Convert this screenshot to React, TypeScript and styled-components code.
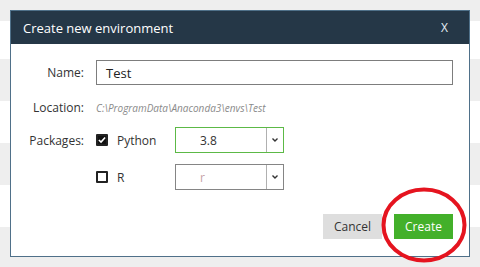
import {FunctionComponent} from 'react'
import styled, {createGlobalStyle} from "styled-components";

const GlobalStyle = createGlobalStyle`
  html, body {
    margin: 0;
    padding: 0;
    width: 480px;
    height: 267px;
    overflow: hidden;
    font-family: "Open Sans", "DejaVu Sans", sans-serif;
    background: linear-gradient(
      to bottom,
      #eeeeee 0 21px,
      #ffffff 21px 59px,
      #eeeeee 59px 101px,
      #ffffff 101px 143px,
      #eeeeee 143px 185px,
      #ffffff 185px 227px,
      #eeeeee 227px
    );
  }
`

const Page = styled.div`
  position: relative;
  width: 480px;
  height: 267px;
`

const Dialog = styled.div`
  position: absolute;
  left: 10px;
  top: 10px;
  width: 458px;
  height: 245px;
  border: 1px solid #4f7089;
  background: #ffffff;
  display: flex;
  flex-direction: column;
`

const Header = styled.div`
  height: 33px;
  background: #253747;
  color: #ffffff;
  display: flex;
  align-items: center;
  justify-content: space-between;
  padding: 0 21px 0 12px;
  font-size: 13px;
`

const Close = styled.span`
  font-size: 12px;
  color: #e6eef5;
`

const Body = styled.div`
  flex: 1;
  display: flex;
  flex-direction: column;
  padding: 16px 16px 17px 0;
`

const Row = styled.div<{ $mt?: number }>`
  display: grid;
  grid-template-columns: 73px 1fr;
  column-gap: 12px;
  align-items: center;
  margin-top: ${p => p.$mt ?? 0}px;
`

const Label = styled.div`
  text-align: right;
  font-size: 12px;
  color: #333333;
`

const TextInput = styled.div`
  height: 25px;
  box-sizing: border-box;
  border: 1px solid #7d7d7d;
  display: flex;
  align-items: center;
  padding-left: 9px;
  font-size: 13px;
  color: #222222;
`

const Path = styled.div`
  font-size: 10px;
  font-style: italic;
  color: #8a8a8a;
`

const Package = styled.div`
  display: flex;
  align-items: center;
`

const Check = styled.div`
  display: flex;
  align-items: center;
  width: 79px;
  font-size: 12px;
  color: #333333;
  gap: 9px;
`

const Box = styled.div<{ $on?: boolean }>`
  width: 12px;
  height: 12px;
  box-sizing: border-box;
  border: 2px solid #222222;
  border-radius: 1px;
  background: ${p => p.$on ? '#111111' : '#ffffff'};
  display: flex;
  align-items: center;
  justify-content: center;
`

const Select = styled.div<{ $active?: boolean }>`
  width: 109px;
  height: 26px;
  box-sizing: border-box;
  border: 1px solid ${p => p.$active ? '#5cb946' : '#858585'};
  display: flex;
`

const SelectValue = styled.div<{ $muted?: boolean }>`
  flex: 1;
  display: flex;
  align-items: center;
  padding-left: 24px;
  font-size: 12px;
  color: ${p => p.$muted ? '#c6a2a6' : '#333333'};
`

const Arrow = styled.div`
  width: 16px;
  border-left: 1px solid #b0b0b0;
  display: flex;
  align-items: center;
  justify-content: center;
`

const Footer = styled.div`
  margin-top: auto;
  display: flex;
  justify-content: flex-end;
  gap: 12px;
`

const Button = styled.div<{ $primary?: boolean }>`
  width: 59px;
  height: 25px;
  display: flex;
  align-items: center;
  justify-content: center;
  font-size: 12px;
  background: ${p => p.$primary ? '#43b02a' : '#dedede'};
  color: ${p => p.$primary ? '#ffffff' : '#333333'};
`

const Circle = styled.svg`
  position: absolute;
  left: 381px;
  top: 187px;
`

const Chevron = () => (
    <svg width="8" height="6" viewBox="0 0 8 6">
        <polyline points="1.5,1.5 4,4 6.5,1.5" fill="none" stroke="#333" strokeWidth="1.4"/>
    </svg>
)

const Tick = () => (
    <svg width="9" height="8" viewBox="0 0 9 8">
        <polyline points="1,4 3.4,6.4 8,1.2" fill="none" stroke="#fff" strokeWidth="1.8"/>
    </svg>
)

const App: FunctionComponent = () => {
    return (
        <>
            <GlobalStyle/>
            <Page>
                <Dialog>
                    <Header>
                        <span>Create new environment</span>
                        <Close>X</Close>
                    </Header>
                    <Body>
                        <Row>
                            <Label>Name:</Label>
                            <TextInput>Test</TextInput>
                        </Row>
                        <Row $mt={14}>
                            <Label>Location:</Label>
                            <Path>C:\ProgramData\Anaconda3\envs\Test</Path>
                        </Row>
                        <Row $mt={11}>
                            <Label>Packages:</Label>
                            <Package>
                                <Check><Box $on><Tick/></Box>Python</Check>
                                <Select $active>
                                    <SelectValue>3.8</SelectValue>
                                    <Arrow><Chevron/></Arrow>
                                </Select>
                            </Package>
                        </Row>
                        <Row $mt={11}>
                            <span/>
                            <Package>
                                <Check><Box/>R</Check>
                                <Select>
                                    <SelectValue $muted>r</SelectValue>
                                    <Arrow><Chevron/></Arrow>
                                </Select>
                            </Package>
                        </Row>
                        <Footer>
                            <Button>Cancel</Button>
                            <Button $primary>Create</Button>
                        </Footer>
                    </Body>
                </Dialog>
                <Circle width="86" height="76" viewBox="0 0 86 76">
                    <ellipse cx="43" cy="38" rx="40.5" ry="35.5" fill="none" stroke="#e5141f" strokeWidth="4"/>
                </Circle>
            </Page>
        </>
    )
}

export default App
